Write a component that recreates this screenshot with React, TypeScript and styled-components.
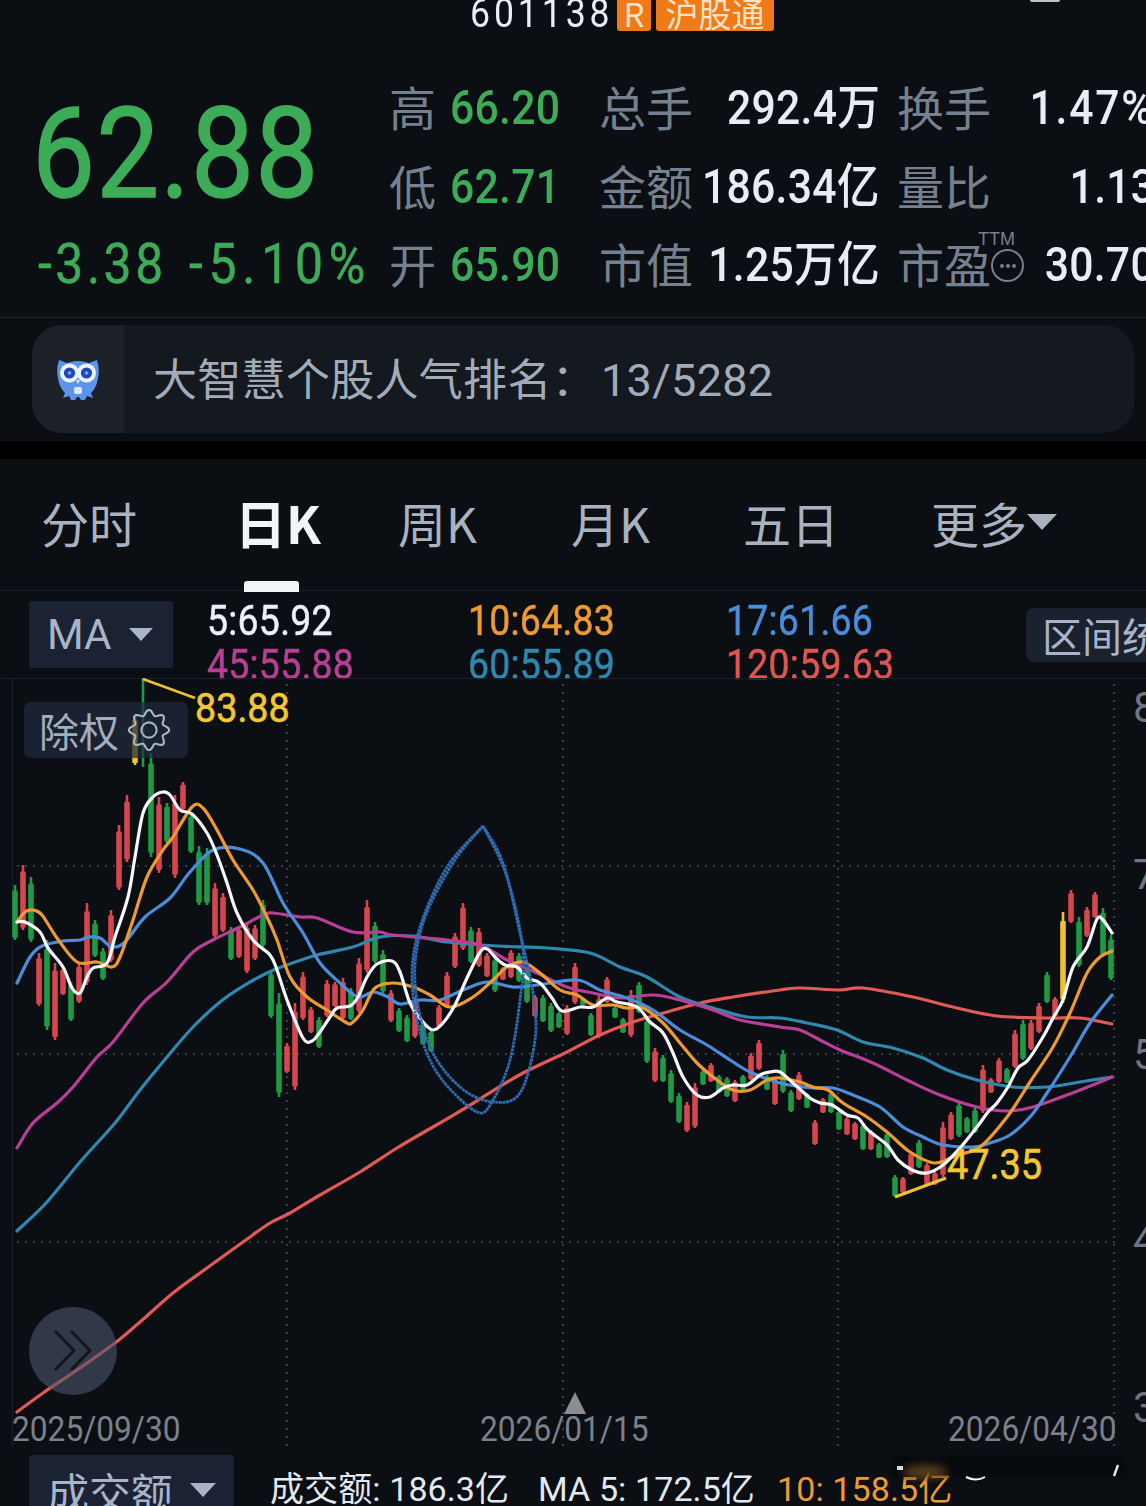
import React from "react";
import styled, { createGlobalStyle } from "styled-components";

const CJK = `"Noto Sans CJK SC", "Noto Sans", sans-serif`;
const NUM = `Roboto, "Noto Sans CJK SC", sans-serif`;
const BG = "#0b0e13";

const Global = createGlobalStyle`
  html, body { margin: 0; padding: 0; background: ${BG}; }
`;

const Page = styled.div`
  position: relative;
  width: 1146px;
  height: 1506px;
  overflow: hidden;
  background: ${BG};
  font-family: ${CJK};
`;

const Header = styled.div`
  position: relative;
  display: flex;
  align-items: flex-end;
  height: 31px;
  padding-left: 470px;
  overflow: hidden;
`;
const Squeezed = styled.span<{ $o?: string }>`
  display: inline-block;
  transform: scaleX(0.89);
  transform-origin: ${(p) => p.$o ?? "left"} center;
  white-space: nowrap;
`;
const Code = styled.span`
  width: 147px;
  flex: none;
  font-family: ${NUM};
  font-size: 40px;
  line-height: 31px;
  color: #e9edf5;
  letter-spacing: 4.4px;
  margin-bottom: 2px;
`;
const Tag = styled.span<{ $w: number; $ml: number }>`
  display: flex;
  align-items: flex-end;
  justify-content: center;
  flex: none;
  width: ${(p) => p.$w}px;
  margin-left: ${(p) => p.$ml}px;
  height: 40px;
  background: #ef7a17;
  border-radius: 3px;
  color: #ffe2c4;
  font-size: 33px;
  line-height: 36px;
`;
const Blip = styled.i`
  position: absolute;
  left: 1030px;
  top: 0;
  width: 30px;
  height: 2px;
  background: #bfc2c7;
  border-radius: 0 0 15px 15px;
`;

const Quote = styled.section`
  display: flex;
  height: 286px;
  border-bottom: 1px solid #20242a;
  overflow: hidden;
`;
const PriceCol = styled.div`
  display: flex;
  flex-direction: column;
  width: 390px;
  flex: none;
  padding: 60px 0 0 32px;
  box-sizing: border-box;
  color: #3dac59;
  font-family: ${NUM};
`;
const Price = styled.div`
  font-size: 126px;
  line-height: 126px;
  height: 126px;
  letter-spacing: 1.3px;
  -webkit-text-stroke: 1.5px #3dac59;
`;
const Change = styled.div`
  display: flex;
  margin: 22px 0 0 6px;
  font-size: 56px;
  line-height: 50px;
`;
const ChangeCell = styled.span<{ $w: number; $ls: number }>`
  flex: none;
  width: ${(p) => p.$w}px;
  letter-spacing: ${(p) => p.$ls}px;
  -webkit-text-stroke: 0.5px #3dac59;
`;
const Stats = styled.div`
  display: grid;
  grid-template-columns: 60px 150px 105px 175px 148px 127px;
  grid-template-rows: 80px 78px 78px;
  margin-top: 37px;
  flex: none;
  width: 765px;
  align-items: center;
`;
const Label = styled.span<{ $pl?: number }>`
  position: relative;
  padding-left: ${(p) => p.$pl ?? 0}px;
  margin: 0 0 4px -1px;
  font-size: 47px;
  line-height: 60px;
  color: #76818f;
  white-space: nowrap;
`;
const Val = styled.span<{ $c?: string; $right?: boolean; $ls?: number }>`
  display: flex;
  justify-content: ${(p) => (p.$right ? "flex-end" : "flex-start")};
  font-family: ${NUM};
  font-size: 48px;
  line-height: 60px;
  font-weight: 500;
  letter-spacing: ${(p) => p.$ls ?? 0.3}px;
  color: ${(p) => p.$c ?? "#e8ecf6"};
  white-space: nowrap;
`;
const Ttm = styled.sup`
  position: absolute;
  left: 99px;
  top: -3px;
  font-family: "Liberation Sans", sans-serif;
  font-size: 18px;
  line-height: 18px;
  color: #76818f;
`;
const MoreDot = styled.span`
  position: absolute;
  left: 112px;
  top: 16px;
  width: 33px;
  height: 33px;
  box-sizing: border-box;
  border: 2px solid #76818f;
  border-radius: 50%;
  display: flex;
  align-items: center;
  justify-content: center;
  gap: 2px;
  &::before, &::after, & > i {
    content: "";
    display: block;
    width: 4px;
    height: 4px;
    background: #76818f;
    border-radius: 50%;
  }
`;

const RankWrap = styled.div`
  padding: 7px 12px 8px 32px;
`;
const Rank = styled.div`
  display: flex;
  align-items: center;
  height: 108px;
  background: #14191f;
  border-radius: 30px;
  overflow: hidden;
`;
const OwlCell = styled.div`
  display: flex;
  align-items: center;
  justify-content: center;
  flex: none;
  width: 92px;
  height: 100%;
  background: #1c2129;
`;
const RankText = styled.span`
  margin-left: 29px;
  font-size: 44px;
  line-height: 60px;
  letter-spacing: 0.3px;
  color: #a2acb9;
  white-space: nowrap;
`;
const RankNum = styled.span`
  display: inline-block;
  font-family: Roboto, sans-serif;
  font-size: 45px;
  margin-left: 5px;
`;
const Band = styled.div`
  height: 18px;
  background: #000;
`;

const Tabs = styled.nav`
  display: flex;
  align-items: center;
  height: 131px;
  padding-left: 41px;
  border-bottom: 1px solid #1c2026;
`;
const Tab = styled.div<{ $w: number; $active?: boolean }>`
  position: relative;
  display: flex;
  align-items: center;
  width: ${(p) => p.$w}px;
  height: 100%;
  margin-top: -6px;
  margin-left: ${(p) => (p.$active ? -3 : 0)}px;
  font-size: ${(p) => (p.$active ? 51 : 48)}px;
  font-weight: ${(p) => (p.$active ? 700 : 400)};
  color: ${(p) => (p.$active ? "#f2f4f8" : "#a9b2be")};
  flex: none;
  white-space: nowrap;
  ${(p) =>
    p.$active &&
    `&::after {
      content: "";
      position: absolute;
      left: 9px;
      bottom: -5px;
      width: 55px;
      height: 11px;
      background: #f2f4f8;
      border-radius: 3px 3px 0 0;
    }`}
`;
const Caret = styled.i<{ $c: string; $w: number }>`
  display: inline-block;
  flex: none;
  width: 0;
  height: 0;
  border-left: ${(p) => p.$w / 2}px solid transparent;
  border-right: ${(p) => p.$w / 2}px solid transparent;
  border-top: ${(p) => Math.round(p.$w * 0.52)}px solid ${(p) => p.$c};
`;

const MaRow = styled.div`
  display: flex;
  align-items: flex-start;
  height: 87px;
`;
const Select = styled.div`
  display: flex;
  align-items: center;
  flex: none;
  box-sizing: border-box;
  width: 144px;
  height: 67px;
  margin: 10px 0 0 29px;
  padding-left: 18px;
  gap: 18px;
  background: #1b2233;
  border-radius: 3px;
  color: #a9b4c8;
  font-family: Roboto, sans-serif;
  font-size: 42px;
`;
const Legend = styled.div`
  display: grid;
  grid-template-columns: 261px 258px 260px;
  grid-auto-rows: 44px;
  margin: 8px 0 0 34px;
  flex: none;
  width: 779px;
`;
const LegendItem = styled.span<{ $c: string }>`
  font-family: ${NUM};
  font-size: 42px;
  line-height: 44px;
  letter-spacing: 0.3px;
  color: ${(p) => p.$c};
  white-space: nowrap;
  -webkit-text-stroke: 0.5px ${(p) => p.$c};
`;
const RangeBtn = styled.div`
  flex: none;
  box-sizing: border-box;
  width: 150px;
  height: 54px;
  margin: 17px 0 0 40px;
  padding-left: 16px;
  background: #1a2230;
  border-radius: 8px;
  color: #a9b4c8;
  font-size: 40px;
  line-height: 54px;
  white-space: nowrap;
`;

const ChartPanel = styled.div`
  position: relative;
  height: 772px;
`;
const ChartSvg = styled.svg`
  display: block;
  width: 1146px;
  height: 772px;
`;
const ChartText = styled.text`
  font-family: ${NUM};
`;
const Adjust = styled.div`
  position: absolute;
  left: 24px;
  top: 24px;
  display: flex;
  align-items: center;
  box-sizing: border-box;
  width: 164px;
  height: 56px;
  padding-left: 15px;
  gap: 8px;
  background: rgba(32, 42, 60, 0.72);
  border-radius: 7px;
  color: #a2adbd;
  font-size: 40px;
  line-height: 56px;
`;
const Expand = styled.div`
  position: absolute;
  left: 29px;
  top: 629px;
  display: flex;
  align-items: center;
  justify-content: center;
  width: 88px;
  height: 88px;
  border-radius: 50%;
  background: rgba(78, 88, 108, 0.58);
`;

const Bottom = styled.div`
  position: relative;
  display: flex;
  align-items: flex-start;
  padding: 5px 0 0 29px;
`;
const VolSelect = styled.div`
  display: flex;
  align-items: center;
  flex: none;
  box-sizing: border-box;
  width: 205px;
  height: 70px;
  padding-left: 18px;
  gap: 17px;
  background: #1b2233;
  border-radius: 3px;
  color: #a9b4c8;
  font-size: 42px;
`;
const VolLegend = styled.div`
  display: flex;
  margin: 12px 0 0 36px;
  font-size: 34px;
  line-height: 44px;
  letter-spacing: 0.1px;
  white-space: nowrap;
`;
const VolItem = styled.span<{ $c: string; $w: number }>`
  display: inline-block;
  flex: none;
  width: ${(p) => p.$w}px;
  color: ${(p) => p.$c};
  font-family: ${NUM};
`;
const Smudge = styled.div`
  position: absolute;
  left: 890px;
  top: 6px;
  width: 235px;
  height: 20px;
  background: #07090c;
  filter: blur(3px);
`;
const SmudgeMarks = styled.svg`
  position: absolute;
  left: 880px;
  top: 0;
  width: 250px;
  height: 40px;
`;
const SmudgeGlow = styled.ellipse`
  fill: #a9722f;
  opacity: 0.5;
  filter: blur(4px);
`;

type Pt = [number, number];
const smooth = (p: Pt[]): string => {
  let d = `M${p[0][0]} ${p[0][1]}`;
  for (let i = 0; i < p.length - 1; i++) {
    const a = p[Math.max(i - 1, 0)];
    const b = p[i];
    const c = p[i + 1];
    const e = p[Math.min(i + 2, p.length - 1)];
    const c1x = b[0] + (c[0] - a[0]) / 6;
    const c1y = b[1] + (c[1] - a[1]) / 6;
    const c2x = c[0] - (e[0] - b[0]) / 6;
    const c2y = c[1] - (e[1] - b[1]) / 6;
    d += ` C${c1x.toFixed(1)} ${c1y.toFixed(1)} ${c2x.toFixed(1)} ${c2y.toFixed(1)} ${c[0]} ${c[1]}`;
  }
  return d;
};

const gearPath = (() => {
  const pts: string[] = [];
  for (let i = 0; i <= 96; i++) {
    const t = (i / 96) * Math.PI * 2;
    const r = 17.5 + 2.6 * Math.cos(8 * t);
    pts.push(`${(22 + r * Math.cos(t)).toFixed(2)} ${(22 + r * Math.sin(t)).toFixed(2)}`);
  }
  return `M${pts.join(" L")} Z`;
})();

const CANDLES: [number, number, string][] = [
  [885,940,"g"],[865,930,"r"],[877,942,"g"],[953,1006,"r"],[940,1030,"g"],[963,1040,"r"],[967,995,"r"],[982,1021,"g"],
  [963,1003,"r"],[903,985,"r"],[920,957,"g"],[948,980,"g"],[910,962,"r"],[825,890,"r"],[795,862,"r"],[715,765,"y"],
  [678,767,"g"],[753,857,"g"],[797,873,"r"],[803,843,"g"],[795,878,"r"],[782,810,"r"],[813,853,"g"],[846,905,"g"],
  [848,905,"g"],[883,938,"r"],[893,932,"r"],[927,960,"g"],[927,958,"r"],[923,973,"r"],[925,960,"r"],[900,947,"g"],
  [970,1018,"g"],[993,1097,"g"],[1043,1073,"r"],[1003,1090,"r"],[972,1020,"r"],[1007,1033,"r"],[1017,1048,"g"],[980,1017,"r"],
  [982,1007,"r"],[978,1020,"r"],[988,1020,"g"],[958,1013,"r"],[900,973,"r"],[922,963,"g"],[950,993,"g"],[990,1022,"r"],
  [1008,1032,"g"],[1015,1042,"g"],[997,1038,"r"],[1022,1045,"g"],[1030,1052,"g"],[1005,1027,"r"],[972,1007,"r"],[933,968,"r"],
  [903,950,"r"],[927,963,"g"],[928,967,"r"],[953,977,"r"],[957,992,"g"],[967,980,"r"],[950,978,"r"],[953,982,"g"],
  [967,1003,"g"],[995,1017,"r"],[995,1022,"g"],[1003,1032,"g"],[1012,1028,"g"],[1005,1035,"r"],[963,1004,"r"],[998,1005,"g"],
  [1013,1036,"g"],[995,1038,"r"],[977,1003,"r"],[1007,1018,"g"],[1018,1033,"g"],[990,1037,"r"],[982,1013,"g"],[1017,1063,"g"],
  [1048,1082,"r"],[1055,1082,"g"],[1070,1103,"g"],[1093,1123,"g"],[1102,1132,"r"],[1083,1128,"r"],[1070,1085,"g"],[1063,1082,"r"],
  [1075,1093,"g"],[1077,1097,"g"],[1080,1102,"r"],[1075,1090,"g"],[1053,1080,"r"],[1040,1070,"r"],[1075,1090,"g"],[1077,1105,"r"],
  [1050,1093,"g"],[1090,1112,"g"],[1072,1100,"r"],[1093,1108,"g"],[1120,1145,"r"],[1098,1113,"r"],[1092,1113,"g"],[1110,1130,"g"],
  [1117,1135,"r"],[1122,1140,"r"],[1123,1150,"g"],[1130,1150,"r"],[1143,1158,"g"],[1132,1158,"g"],[1175,1197,"g"],[1177,1193,"r"],
  [1152,1175,"r"],[1140,1168,"g"],[1163,1185,"r"],[1172,1185,"r"],[1122,1177,"r"],[1112,1140,"r"],[1102,1137,"g"],[1117,1133,"g"],
  [1108,1133,"g"],[1065,1113,"r"],[1078,1093,"r"],[1058,1083,"r"],[1068,1083,"g"],[1030,1068,"r"],[1020,1060,"g"],[1020,1050,"r"],
  [1003,1033,"r"],[972,1003,"g"],[997,1017,"r"],[912,1003,"y"],[890,923,"r"],[917,967,"g"],[907,937,"r"],[892,918,"r"],
  [908,957,"g"],[935,980,"g"],
];
const CANDLE_COLOR: Record<string, string> = { r: "#d6464d", g: "#1e9a45", y: "#efc22e" };

const RED: Pt[] = [[17,1412],[43,1393],[77,1370],[115,1343],[140,1322],[173,1293],[207,1268],[243,1242],[270,1223],[290,1213],[320,1195],[360,1172],[397,1148],[433,1127],[467,1107],[483,1097],[523,1073],[567,1052],[600,1035],[633,1022],[667,1012],[700,1003],[733,997],[780,990],[800,988],[840,990],[863,988],[913,997],[953,1007],[997,1016],[1047,1018],[1080,1018],[1112,1024]];
const TEAL: Pt[] = [[17,1231],[47,1202],[80,1162],[115,1123],[140,1090],[167,1057],[193,1027],[220,1002],[240,988],[267,973],[287,965],[317,955],[353,947],[380,937],[413,936],[447,942],[497,946],[547,948],[590,953],[620,967],[647,977],[680,997],[713,1008],[747,1017],[780,1018],[807,1023],[837,1030],[863,1042],[893,1048],[923,1058],[947,1070],[977,1080],[1013,1087],[1047,1087],[1080,1082],[1112,1077]];
const MAGENTA: Pt[] = [[17,1148],[33,1123],[57,1103],[73,1087],[97,1057],[113,1042],[143,1003],[167,982],[193,952],[213,940],[240,927],[263,915],[273,913],[300,917],[317,918],[353,932],[380,932],[393,935],[447,940],[480,945],[507,960],[537,973],[567,987],[593,993],[620,998],[653,995],[680,1000],[713,1010],[740,1020],[780,1027],[800,1030],[820,1040],[840,1050],[873,1063],[907,1080],[940,1095],[977,1107],[1007,1111],[1033,1107],[1067,1095],[1100,1082],[1112,1077]];
const BLUE: Pt[] = [[17,983],[30,957],[42,946],[63,941],[80,940],[88,937],[100,938],[112,947],[125,942],[145,917],[170,898],[190,872],[213,850],[240,849],[263,863],[283,903],[303,933],[320,963],[340,983],[358,997],[373,992],[388,997],[400,1004],[420,1000],[440,1000],[463,990],[487,982],[513,987],[537,985],[577,980],[600,990],[627,998],[653,1010],[680,1030],[707,1045],[730,1060],[750,1072],[780,1083],[813,1088],[833,1088],[853,1095],[880,1107],[903,1127],[923,1137],[943,1145],[973,1147],[990,1143],[1010,1135],[1030,1117],[1047,1093],[1070,1057],[1090,1023],[1112,995]];
const ORANGE: Pt[] = [[17,922],[25,912],[33,910],[42,915],[57,938],[77,962],[97,962],[112,967],[120,957],[133,920],[147,877],[163,850],[173,837],[192,807],[203,808],[217,830],[233,860],[253,890],[267,917],[277,940],[290,977],[307,997],[327,1010],[347,1023],[353,1022],[363,1010],[375,988],[393,983],[413,987],[430,995],[450,1007],[473,997],[493,980],[507,967],[523,962],[540,973],[560,990],[577,995],[593,1005],[613,1005],[627,1008],[643,1008],[663,1023],[680,1043],[697,1063],[717,1080],[733,1090],[750,1090],[767,1080],[780,1078],[800,1082],[813,1087],[828,1090],[843,1103],[867,1117],[887,1132],[910,1152],[935,1163],[957,1155],[980,1147],[1007,1117],[1030,1082],[1053,1047],[1070,1013],[1087,973],[1100,957],[1112,951]];
const WHITE: Pt[] = [[17,922],[25,922],[40,932],[48,948],[63,967],[72,988],[80,993],[87,977],[93,968],[107,963],[115,937],[128,897],[135,857],[143,813],[153,797],[163,792],[170,795],[180,810],[192,814],[207,833],[217,855],[227,883],[237,913],[253,940],[270,955],[277,970],[287,1000],[303,1038],[312,1041],[320,1032],[330,1017],[337,1008],[350,1006],[358,997],[367,977],[377,964],[392,961],[400,972],[410,1003],[423,1022],[433,1030],[443,1023],[455,1005],[467,978],[480,952],[487,949],[495,957],[505,965],[517,967],[527,978],[540,983],[552,998],[562,1011],[580,1007],[593,1007],[607,998],[617,1002],[637,1007],[650,1022],[663,1033],[673,1053],[683,1077],[697,1095],[710,1097],[723,1088],[733,1085],[747,1085],[760,1075],[770,1072],[780,1072],[793,1083],[810,1098],[820,1103],[832,1105],[847,1115],[858,1118],[868,1130],[887,1145],[898,1160],[912,1170],[927,1173],[943,1165],[960,1148],[977,1127],[988,1112],[997,1103],[1008,1087],[1018,1068],[1028,1060],[1043,1037],[1053,1018],[1063,1000],[1073,967],[1087,947],[1097,919],[1103,920],[1112,933]];
const LOOP_A: Pt[] = [[483,826],[447,867],[420,927],[412,977],[420,1033],[440,1077],[477,1112],[493,1100],[510,1060],[520,1000],[523,950],[507,877],[483,826]];
const LOOP_B: Pt[] = [[483,826],[453,863],[423,923],[415,983],[430,1047],[460,1087],[493,1102],[520,1093],[535,1040],[533,993],[520,933],[503,863],[483,826]];

const LINES: [Pt[], string][] = [
  [RED, "#e25a54"],
  [TEAL, "#2e88b0"],
  [MAGENTA, "#b83f95"],
  [BLUE, "#4a8edb"],
  [ORANGE, "#ee9a30"],
  [WHITE, "#f6f6fa"],
];

const Chart = () => (
  <ChartSvg viewBox="0 678 1146 772">
    <line x1="0" y1="678.5" x2="1146" y2="678.5" stroke="#1c2026" />
    <line x1="12.5" y1="678" x2="12.5" y2="1447" stroke="#1c2026" />
    {[866, 1054, 1242].map((y) => (
      <line key={y} x1="17" x2="1115" y1={y} y2={y} stroke="#3a3e44" strokeWidth="2" strokeDasharray="2 6" />
    ))}
    {[287, 563, 838, 1114].map((x) => (
      <line key={x} x1={x} x2={x} y1="684" y2="1447" stroke="#3a3e44" strokeWidth="2" strokeDasharray="2 6" />
    ))}
    {CANDLES.map(([t, b, c], i) => {
      const x = 15 + 8 * i;
      const r = b - t;
      return (
        <g key={i} fill={CANDLE_COLOR[c]}>
          <rect x={x - 1.3} y={t} width="2.6" height={r} />
          <rect x={x - 2.8} y={t + (i === 16 ? r : r * 0.1)} width="5.6" height={i === 16 ? 0 : r * 0.86} rx="1" />
        </g>
      );
    })}
    {LINES.map(([p, c]) => (
      <path key={c} d={smooth(p)} fill="none" stroke={c} strokeWidth="3.2" strokeLinecap="round" strokeLinejoin="round" />
    ))}
    <path d={smooth(LOOP_A)} fill="none" stroke="#2f6cb4" strokeWidth="2.8" strokeDasharray="3 0.6" />
    <path d={smooth(LOOP_B)} fill="none" stroke="#2f6cb4" strokeWidth="2.8" strokeDasharray="3 0.6" />
    <path d="M143 679 L195 698" stroke="#efc22e" strokeWidth="2.6" fill="none" />
    <path d="M895 1197 L946 1178" stroke="#efc22e" strokeWidth="3" fill="none" />
    <g transform="translate(195 722) scale(0.92 1)">
      <ChartText fill="#f3c730" fontSize="41" stroke="#f3c730" strokeWidth="0.6">83.88</ChartText>
    </g>
    <g transform="translate(947 1179) scale(0.88 1)">
      <ChartText fill="#f3c730" fontSize="43" stroke="#f3c730" strokeWidth="0.6">47.35</ChartText>
    </g>
    {([["8", 722], ["7", 889], ["5", 1069], ["4", 1254], ["3", 1422]] as [string, number][]).map(([t, y]) => (
      <ChartText key={t} x="1133" y={y} fill="#6f7681" fontSize="42">{t}</ChartText>
    ))}
    {([["2025/09/30", 12], ["2026/01/15", 480], ["2026/04/30", 948]] as [string, number][]).map(([t, x]) => (
      <g key={t} transform={`translate(${x} 1441) scale(0.88 1)`}>
        <ChartText fill="#7b818b" fontSize="36">{t}</ChartText>
      </g>
    ))}
    <path d="M575 1392 L586 1414 L564 1414 Z" fill="#8a8d92" />
  </ChartSvg>
);

const Owl = () => (
  <svg width="44" height="48" viewBox="0 0 44 48">
    <path d="M3 5 L11 8 Q22 4 33 8 L41 5 Q44 15 42 23 Q41 32 35 38 L37 43 L31 41 L29 45 H25 L23 42 H21 L19 45 H15 L13 41 L7 43 L9 38 Q3 32 2 23 Q0 15 3 5 Z" fill="#5a94ee" />
    <circle cx="13.5" cy="18" r="9.5" fill="#eef4ff" />
    <circle cx="30.5" cy="18" r="9.5" fill="#eef4ff" />
    <circle cx="13.5" cy="18" r="5.6" fill="#2148b8" />
    <circle cx="30.5" cy="18" r="5.6" fill="#2148b8" />
    <circle cx="13.5" cy="18" r="1.8" fill="#7ea6f2" />
    <circle cx="30.5" cy="18" r="1.8" fill="#7ea6f2" />
    <path d="M20 25 L22 29 L24 25 Z" fill="#dbe7ff" />
    <rect x="18" y="32" width="8" height="7" rx="2" fill="#dbe8ff" />
  </svg>
);

const Gear = () => (
  <svg width="44" height="44" viewBox="0 0 44 44" fill="none" stroke="#a9b4c4" strokeWidth="2.1">
    <path d={gearPath} strokeLinejoin="round" />
    <circle cx="22" cy="22" r="7.6" />
  </svg>
);

const Chevrons = () => (
  <svg width="40" height="42" viewBox="0 0 40 42" fill="none" stroke="#12151b" strokeWidth="3" strokeLinecap="round" strokeLinejoin="round">
    <path d="M3 2 L21 20.5 L3 39" />
    <path d="M19 2 L37 20.5 L19 39" />
  </svg>
);

export default function App() {
  return (
    <Page>
      <Global />
      <Header>
        <Code><Squeezed>601138</Squeezed></Code>
        <Tag $w={34} $ml={0}>R</Tag>
        <Tag $w={118} $ml={5}>沪股通</Tag>
        <Blip />
      </Header>
      <Quote>
        <PriceCol>
          <Price><Squeezed>62.88</Squeezed></Price>
          <Change>
            <ChangeCell $w={151} $ls={4}><Squeezed>-3.38</Squeezed></ChangeCell>
            <ChangeCell $w={190} $ls={6.5}><Squeezed>-5.10%</Squeezed></ChangeCell>
          </Change>
        </PriceCol>
        <Stats>
          <Label>高</Label>
          <Val $c="#3dac59"><Squeezed>66.20</Squeezed></Val>
          <Label>总手</Label>
          <Val $right><Squeezed $o="right">292.4万</Squeezed></Val>
          <Label $pl={18}>换手</Label>
          <Val $right $ls={2}><Squeezed $o="right">1.47%</Squeezed></Val>
          <Label>低</Label>
          <Val $c="#3dac59"><Squeezed>62.71</Squeezed></Val>
          <Label>金额</Label>
          <Val $right><Squeezed $o="right">186.34亿</Squeezed></Val>
          <Label $pl={18}>量比</Label>
          <Val $right><Squeezed $o="right">1.13</Squeezed></Val>
          <Label>开</Label>
          <Val $c="#3dac59"><Squeezed>65.90</Squeezed></Val>
          <Label>市值</Label>
          <Val $right><Squeezed $o="right">1.25万亿</Squeezed></Val>
          <Label $pl={18}>
            市盈
            <Ttm>TTM</Ttm>
            <MoreDot><i /></MoreDot>
          </Label>
          <Val $right><Squeezed $o="right">30.70</Squeezed></Val>
        </Stats>
      </Quote>
      <RankWrap>
        <Rank>
          <OwlCell><Owl /></OwlCell>
          <RankText>大智慧个股人气排名：<RankNum>13/5282</RankNum></RankText>
        </Rank>
      </RankWrap>
      <Band />
      <Tabs>
        <Tab $w={197}>分时</Tab>
        <Tab $w={163} $active>日K</Tab>
        <Tab $w={173}>周K</Tab>
        <Tab $w={172}>月K</Tab>
        <Tab $w={188}>五日</Tab>
        <Tab $w={130}>更多<Caret $c="#a9b2be" $w={30} /></Tab>
      </Tabs>
      <MaRow>
        <Select>MA<Caret $c="#a9b4c8" $w={25} /></Select>
        <Legend>
          <LegendItem $c="#eef0f7"><Squeezed>5:65.92</Squeezed></LegendItem>
          <LegendItem $c="#ef9a30"><Squeezed>10:64.83</Squeezed></LegendItem>
          <LegendItem $c="#4a8edb"><Squeezed>17:61.66</Squeezed></LegendItem>
          <LegendItem $c="#b83f95"><Squeezed>45:55.88</Squeezed></LegendItem>
          <LegendItem $c="#2e88b0"><Squeezed>60:55.89</Squeezed></LegendItem>
          <LegendItem $c="#df5650"><Squeezed>120:59.63</Squeezed></LegendItem>
        </Legend>
        <RangeBtn>区间统计</RangeBtn>
      </MaRow>
      <ChartPanel>
        <Chart />
        <Adjust>除权<Gear /></Adjust>
        <Expand><Chevrons /></Expand>
      </ChartPanel>
      <Bottom>
        <VolSelect>成交额<Caret $c="#a9b4c8" $w={26} /></VolSelect>
        <VolLegend>
          <VolItem $c="#e4e8f1" $w={268}>成交额: 186.3亿</VolItem>
          <VolItem $c="#e4e8f1" $w={239}>MA 5: 172.5亿</VolItem>
          <VolItem $c="#ef9a30" $w={200}>10: 158.5亿</VolItem>
        </VolLegend>
        <Smudge />
        <SmudgeMarks viewBox="880 0 250 40">
          <SmudgeGlow cx="925" cy="22" rx="22" ry="7" />
          <path d="M966 27 Q976 32 985 27" stroke="#f2f3f6" strokeWidth="2" fill="none" />
          <path d="M897 18 H903" stroke="#d8dbe2" strokeWidth="4" />
          <path d="M1114 26 L1118 15" stroke="#e8eaef" strokeWidth="2.4" />
        </SmudgeMarks>
      </Bottom>
    </Page>
  );
}
